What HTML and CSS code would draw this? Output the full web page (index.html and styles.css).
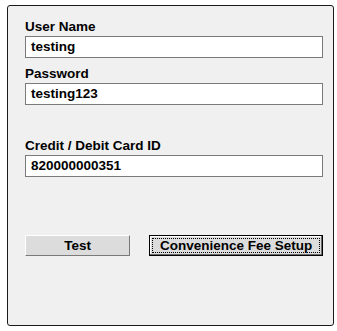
FILE: index.html
```html
<!DOCTYPE html>
<html><head><meta charset="utf-8">
<title>Settings</title>
<link rel="stylesheet" href="styles.css">
</head>
<body>
<div class="panel">
	<div class="field">
		<label>User Name</label>
		<div class="box">testing</div>
	</div>
	<div class="field">
		<label>Password</label>
		<div class="box">testing123</div>
	</div>
	<div class="field card">
		<label>Credit / Debit Card ID</label>
		<div class="box">820000000351</div>
	</div>
	<div class="buttons">
		<button class="btn test">Test</button>
		<button class="btn fee"><span>Convenience Fee Setup</span></button>
	</div>
</div>
</body>
</html>
```

FILE: styles.css
```css
body {
	margin: 0;
	background: #fff;
	font-family: "Liberation Sans", Arial, sans-serif;
	font-size: 13.5px;
	font-weight: bold;
	color: #000;
}
.panel {
	box-sizing: border-box;
	display: flex;
	flex-direction: column;
	width: 327px;
	height: 321px;
	margin: 5px 0 0 7px;
	border: 1px solid #1a1a1a;
	border-radius: 3px;
	background: #f0f0f0;
	padding: 13px 10px 0 17px;
}
.field {
	display: flex;
	flex-direction: column;
	margin-bottom: 8px;
}
.field label {
	line-height: 15px;
	margin-bottom: 2px;
}
.field.card {
	margin-top: 25px;
}
.box {
	box-sizing: border-box;
	height: 22px;
	border: 1px solid #7a7a7a;
	background: #fff;
	padding: 0 5px;
	line-height: 20px;
}
.buttons {
	display: flex;
	gap: 19px;
	margin-top: 50px;
}
.btn {
	box-sizing: border-box;
	height: 21px;
	font: inherit;
	color: #000;
	background: #dcdcdc;
	border: 1px solid;
	border-color: #fff #7a7a7a #7a7a7a #fff;
	padding: 0;
}
.test {
	width: 106px;
}
.fee {
	width: 175px;
	border: 1px solid #000;
	box-shadow: inset -1px -1px #6a6a6a, inset 1px 1px #fff;
	padding: 2px;
}
.fee span {
	display: block;
	height: 100%;
	line-height: 13px;
	border: 1px dotted #000;
	box-sizing: border-box;
}
```
